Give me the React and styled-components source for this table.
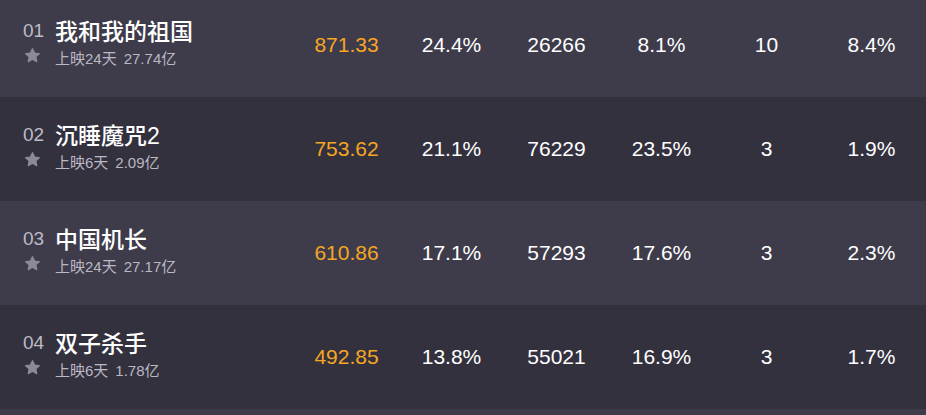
import React from "react";
import styled, { createGlobalStyle } from "styled-components";

const GlobalStyle = createGlobalStyle`
  html, body {
    margin: 0;
    padding: 0;
    background: #3e3b4b;
    overflow: hidden;
  }
  body {
    font-family: "Liberation Sans", "Noto Sans CJK SC", sans-serif;
  }
`;

const List = styled.div`
  display: flex;
  flex-direction: column;
  margin-top: -7px;
`;

const Row = styled.div`
  display: flex;
  align-items: center;
  height: 104px;
  background: ${(p) => (p.$dark ? "#34313f" : "#3e3b4b")};
`;

const MovieCell = styled.div`
  width: 294px;
  box-sizing: border-box;
  padding-left: 23px;
  display: grid;
  grid-template-columns: 32px 1fr;
  grid-template-rows: 28px 26px;
  align-items: center;
`;

const Rank = styled.div`
  font-size: 19px;
  color: #bdbbc6;
  line-height: 28px;
  margin-top: -3px;
`;

const Title = styled.div`
  font-size: 23px;
  font-weight: 500;
  color: #ffffff;
  line-height: 28px;
  white-space: nowrap;
`;

const StarBox = styled.div`
  display: flex;
  align-items: center;
  height: 26px;
  margin-top: -7px;
  margin-left: 1px;
`;

const Meta = styled.div`
  display: flex;
  gap: 7px;
  font-size: 15px;
  color: #bab8c3;
  line-height: 26px;
  white-space: nowrap;
`;

const Cell = styled.div`
  width: 105px;
  text-align: center;
  font-size: 21px;
  color: ${(p) => (p.$accent ? "#f5a623" : "#ffffff")};
  white-space: nowrap;
`;

const Star = () => (
  <svg width="17" height="17" viewBox="0 0 24 24">
    <path
      d="M12 2.5l2.9 6.1 6.6.8-4.9 4.5 1.3 6.6L12 17.2l-5.9 3.3 1.3-6.6-4.9-4.5 6.6-.8z"
      fill="#8c8a97"
      stroke="#8c8a97"
      strokeWidth="2"
      strokeLinejoin="round"
    />
  </svg>
);

const movies = [
  { rank: "01", name: "我和我的祖国", days: "上映24天", total: "27.74亿", values: ["871.33", "24.4%", "26266", "8.1%", "10", "8.4%"] },
  { rank: "02", name: "沉睡魔咒2", days: "上映6天", total: "2.09亿", values: ["753.62", "21.1%", "76229", "23.5%", "3", "1.9%"] },
  { rank: "03", name: "中国机长", days: "上映24天", total: "27.17亿", values: ["610.86", "17.1%", "57293", "17.6%", "3", "2.3%"] },
  { rank: "04", name: "双子杀手", days: "上映6天", total: "1.78亿", values: ["492.85", "13.8%", "55021", "16.9%", "3", "1.7%"] },
];

export default function App() {
  return (
    <>
      <GlobalStyle />
      <List>
        {movies.map((m, i) => (
          <Row key={m.rank} $dark={i % 2 === 1}>
            <MovieCell>
              <Rank>{m.rank}</Rank>
              <Title>{m.name}</Title>
              <StarBox>
                <Star />
              </StarBox>
              <Meta>
                <span>{m.days}</span>
                <span>{m.total}</span>
              </Meta>
            </MovieCell>
            {m.values.map((v, j) => (
              <Cell key={j} $accent={j === 0}>
                {v}
              </Cell>
            ))}
          </Row>
        ))}
      </List>
    </>
  );
}
